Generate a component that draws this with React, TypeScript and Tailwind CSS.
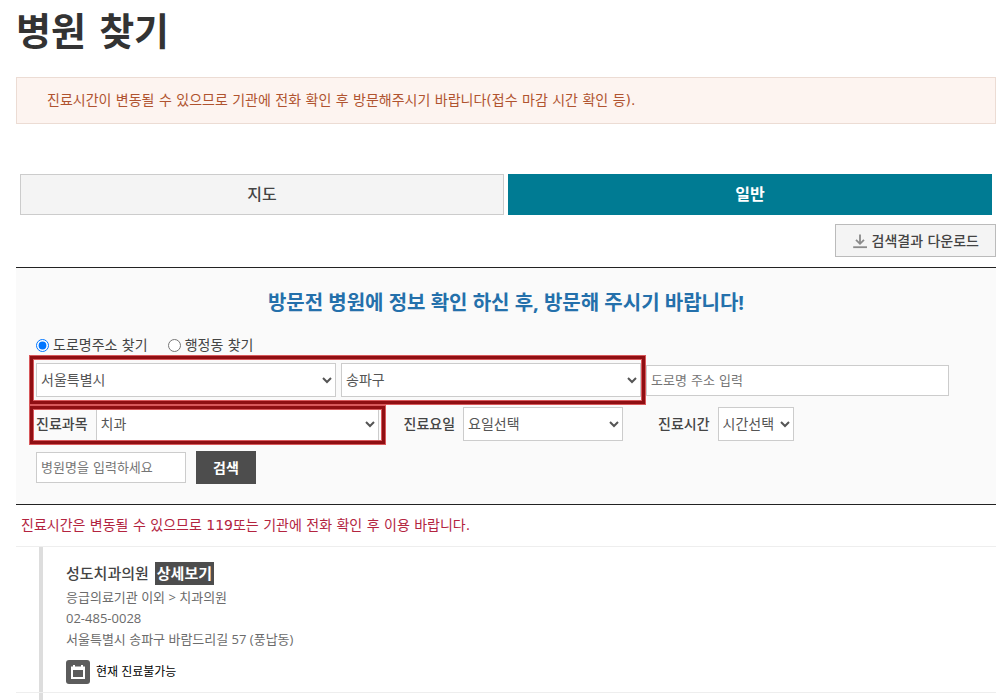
import type { ReactNode } from 'react';

const inputStyle =
  'h-[31px] border border-[#ccc] bg-white px-1 text-[13px] text-[#555] placeholder:text-[#757575]';
const selectStyle = 'h-[34px] border border-[#ccc] bg-white text-sm text-[#555]';

function Highlight({ frame, children }: { frame: string; children: ReactNode }) {
  return (
    <div className="relative flex items-center">
      {children}
      <span
        className={`pointer-events-none absolute -left-1.5 border-[3px] border-[#8f0f13] outline outline-[#d8585b] shadow-[inset_0_0_0_1px_#d8585b] ${frame}`}
      />
    </div>
  );
}

function DownloadIcon() {
  return (
    <svg className="h-4 w-4" viewBox="0 0 16 16" fill="none" stroke="#8a8a8a">
      <path d="M8 1.5V10.5M4 6.8L8 10.8L12 6.8" strokeWidth="1.8" />
      <path d="M1.2 14.2H15" strokeWidth="1.8" />
    </svg>
  );
}

function CalendarIcon() {
  return (
    <svg className="h-6 w-6" viewBox="0 0 24 24">
      <rect width="24" height="24" rx="3" fill="#5c5c5c" />
      <path
        fillRule="evenodd"
        d="M5 6.5H7V5H9V6.5H15V5H17V6.5H19V19H5ZM7 10V17H17V10Z"
        fill="#fff"
      />
    </svg>
  );
}

export default function App() {
  return (
    <main className="bg-white pl-4 pr-[11px] font-['DejaVu_Sans','Noto_Sans_CJK_KR',sans-serif] text-[#444]">
      <h1 className="pt-2 text-[38px] leading-[48px] font-bold text-[#333]">병원 찾기</h1>

      <p className="mt-[21px] border border-[#ecdcd4] bg-[#fdf4f0] px-[30px] py-3 text-sm leading-[21px] text-[#b0532f]">
        진료시간이 변동될 수 있으므로 기관에 전화 확인 후 방문해주시기 바랍니다(접수 마감 시간 확인 등).
      </p>

      <div className="mt-[50px] grid grid-cols-2 gap-1 px-1">
        <button type="button" className="h-[41px] border border-[#ccc] bg-[#f4f4f4] font-medium">
          지도
        </button>
        <button type="button" className="h-[41px] bg-[#007b93] font-bold text-white">
          일반
        </button>
      </div>

      <div className="mt-[9px] flex justify-end">
        <button
          type="button"
          className="flex h-[33px] items-center gap-1 border border-[#bbb] bg-[#f4f4f4] px-4 text-sm font-medium"
        >
          <DownloadIcon />
          검색결과 다운로드
        </button>
      </div>

      <form className="mt-2.5 border-y border-[#222] bg-[#fafafa] px-5 pt-5 pb-5">
        <h2 className="text-center font-['Open_Sans','Noto_Sans_CJK_KR',sans-serif] text-xl leading-[30px] font-bold text-[#2470ab]">
          방문전 병원에 정보 확인 하신 후, 방문해 주시기 바랍니다!
        </h2>

        <div className="mt-[17px] flex gap-5 text-sm">
          <label className="flex items-center gap-1">
            <input type="radio" name="addr" defaultChecked className="h-[13px] w-[13px]" />
            도로명주소 찾기
          </label>
          <label className="flex items-center gap-1">
            <input type="radio" name="addr" className="h-[13px] w-[13px]" />
            행정동 찾기
          </label>
        </div>

        <div className="mt-2 flex flex-wrap items-center gap-[5px]">
          <Highlight frame="-top-[7px] -bottom-[7px] -right-1">
            <select aria-label="시도" className={`${selectStyle} mr-[5px] w-[300px]`}>
              <option>서울특별시</option>
            </select>
            <select aria-label="시군구" className={`${selectStyle} w-[300px]`}>
              <option>송파구</option>
            </select>
          </Highlight>
          <input
            type="text"
            aria-label="도로명 주소"
            placeholder="도로명 주소 입력"
            className={`${inputStyle} w-[303px]`}
          />
        </div>

        <div className="mt-2.5 flex flex-wrap items-center text-sm font-medium">
          <Highlight frame="-top-px -bottom-[3px] -right-1.5">
            <label htmlFor="subject" className="mr-2">진료과목</label>
            <select id="subject" className={`${selectStyle} w-[283px] font-normal`}>
              <option>치과</option>
            </select>
          </Highlight>
          <label htmlFor="day" className="mr-2 ml-[25px]">진료요일</label>
          <select id="day" className={`${selectStyle} w-40 font-normal`}>
            <option>요일선택</option>
          </select>
          <label htmlFor="time" className="mr-2 ml-[35px]">진료시간</label>
          <select id="time" className={`${selectStyle} w-[76px] font-normal`}>
            <option>시간선택</option>
          </select>
        </div>

        <div className="mt-2.5 flex items-center gap-2.5">
          <input
            type="text"
            aria-label="병원명"
            placeholder="병원명을 입력하세요"
            className={`${inputStyle} w-[150px]`}
          />
          <button type="submit" className="h-[33px] w-[60px] bg-[#4d4d4d] text-sm font-bold text-white">
            검색
          </button>
        </div>
      </form>

      <p className="px-[5px] pt-2.5 pb-[11px] text-sm leading-5 text-[#b3243f]">
        진료시간은 변동될 수 있으므로 119또는 기관에 전화 확인 후 이용 바랍니다.
      </p>

      <ul className="font-['Open_Sans','Noto_Sans_CJK_KR',sans-serif]">
        <li className="border-t border-[#eee]">
          <div className="ml-[23px] border-l-4 border-[#ddd] pt-[15px] pb-2 pl-[23px]">
            <div className="flex items-center gap-1.5 text-[15px] leading-[23px]">
              <strong className="font-medium">성도치과의원</strong>
              <a href="#detail" className="bg-[#4d4d4d] px-0.5 font-bold text-white">상세보기</a>
            </div>
            <div className="mt-0.5 text-[13px] leading-[21px] text-[#6b6b6b]">
              <p>응급의료기관 이외 &gt; 치과의원</p>
              <p>02-485-0028</p>
              <p>서울특별시 송파구 바람드리길 57 (풍납동)</p>
            </div>
            <div className="mt-2.5 flex items-center gap-1.5 text-xs text-black">
              <CalendarIcon />
              현재 진료불가능
            </div>
          </div>
        </li>
        <li className="border-t border-[#eee]">
          <div className="ml-[23px] h-[7px] border-l-4 border-[#ddd]" />
        </li>
      </ul>
    </main>
  );
}
